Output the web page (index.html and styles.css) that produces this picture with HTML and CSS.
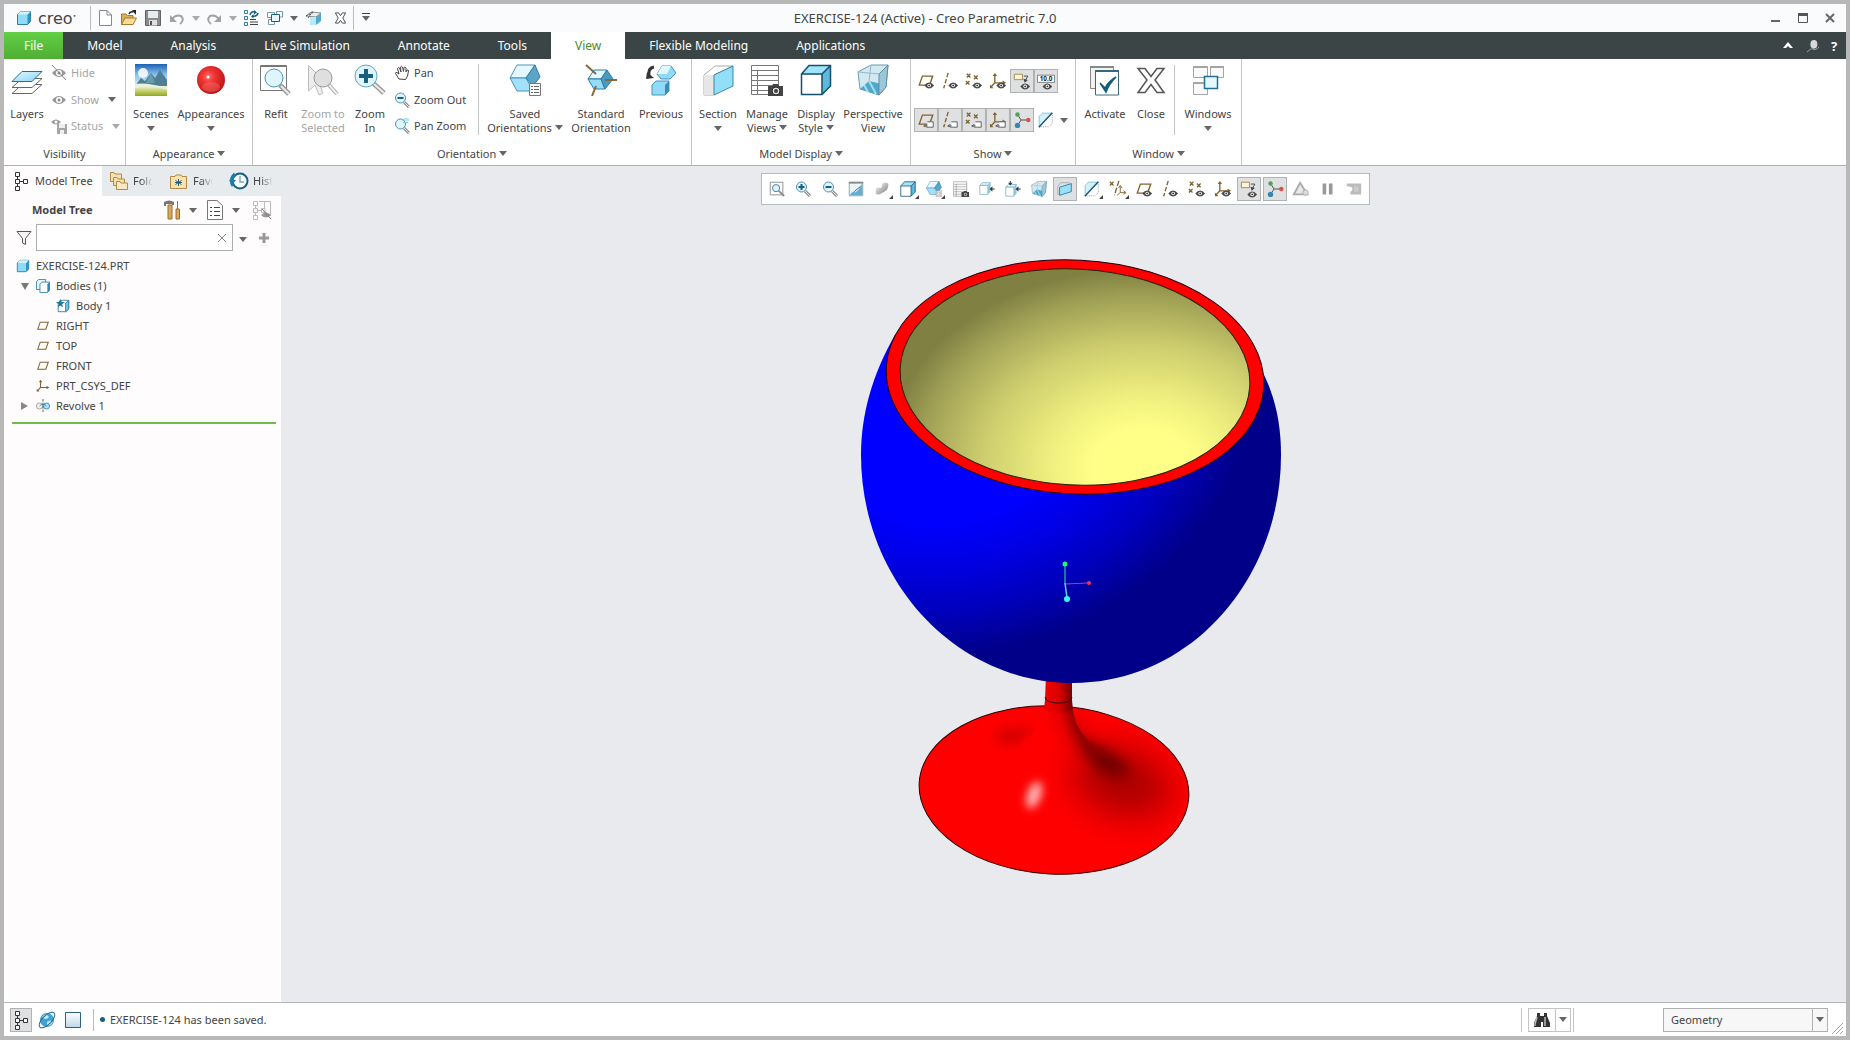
FILE: index.html
```html
<!DOCTYPE html>
<html lang="en">
<head>
  <meta charset="UTF-8">
  <meta name="viewport" content="width=device-width, initial-scale=1">
  <title>EXERCISE-124 (Active) - Creo Parametric 7.0</title>
  <link rel="stylesheet" href="styles.css">
</head>
<body>

  <!-- Icon sprite -->
  <svg class="sprite" aria-hidden="true">
    <defs>
      <linearGradient id="sky" x1="0" y1="0" x2="0" y2="1"><stop offset="0" stop-color="#1c62b4"/><stop offset=".5" stop-color="#8cc4ea"/><stop offset="1" stop-color="#d8ecf4"/></linearGradient>
      <linearGradient id="grass" x1="0" y1="0" x2="0" y2="1"><stop offset="0" stop-color="#f4f6c8"/><stop offset="1" stop-color="#92a81c"/></linearGradient>
      <radialGradient id="ball" cx=".4" cy=".38" r=".65"><stop offset="0" stop-color="#ff7070"/><stop offset=".35" stop-color="#f23434"/><stop offset="1" stop-color="#bb1414"/></radialGradient>
      <linearGradient id="ice" x1="0" y1="0" x2="1" y2="1"><stop offset="0" stop-color="#e6f9ff"/><stop offset="1" stop-color="#84d2f4"/></linearGradient>
      <linearGradient id="pane" x1="0" y1="0" x2="0" y2="1"><stop offset="0" stop-color="#ffffff"/><stop offset="1" stop-color="#bcd8ea"/></linearGradient>
      <linearGradient id="metal" x1="0" y1="0" x2="1" y2="1"><stop offset="0" stop-color="#ffffff"/><stop offset="1" stop-color="#777777"/></linearGradient>
    </defs>

    <symbol id="eye" viewBox="0 0 10 7"><path d="M0 3.5Q5-2.6 10 3.5Q5 9.6 0 3.5Z" fill="#4a4a4a"/><circle cx="5" cy="3.5" r="1.8" fill="#fff"/><circle cx="5" cy="3.5" r=".9" fill="#333"/></symbol>
    <symbol id="tag" viewBox="0 0 12 8"><path d="M5 1h6.500v6H4.500L1 5.500Q3 5 5 6" fill="#fff" stroke="#555"/><path d="M1 6q2-3 4-1" fill="none" stroke="#555"/></symbol>
    <symbol id="cube" viewBox="0 0 16 16"><path d="M1.500 4.500L4.500 1.500H14.500V11.500L11.500 14.500H1.500Z" fill="#8edcf8" stroke="#2b7da5"/><path d="M11.500 4.500L14.500 1.500V11.500L11.500 14.500Z" fill="#2f93c0"/><path d="M1.500 4.500L4.500 1.500H14.500L11.500 4.500Z" fill="#d4f4ff"/></symbol>
    <symbol id="lens" viewBox="0 0 16 16"><path d="M10 10L15 15" stroke="#8c8c8c" stroke-width="3"/><path d="M10 10L15 15" stroke="#e8e8e8"/><circle cx="6.500" cy="6" r="5" fill="#e2f4fb" stroke="#4b93b8"/></symbol>

    <!-- quick access -->
    <symbol id="new" viewBox="0 0 16 16"><path d="M2.500.5H10L14.500 5V15.500H2.500Z" fill="#fff" stroke="#888"/><path d="M10 .5V5H14.500" fill="none" stroke="#888"/></symbol>
    <symbol id="open" viewBox="0 0 16 16"><path d="M.5 14.500V4H5L6.500 5.500H12V14.500Z" fill="#dcae55" stroke="#a57a2c"/><path d="M.5 14.500L4 8H15.500L12 14.500Z" fill="#f9dc9a" stroke="#a57a2c"/><path d="M8 4Q9 1 12.500 2" fill="none" stroke="#222" stroke-width="1.500"/><path d="M11 0H15V5Z" fill="#222"/></symbol>
    <symbol id="save" viewBox="0 0 16 16"><path d="M.5.5H15.500V15.500H.5Z" fill="#8b8b8b" stroke="#636363"/><path d="M3 1H13V8H3Z" fill="#e2edf2"/><path d="M4 10H12V15.500H4Z" fill="#e0e0e0"/><path d="M5 11H7V15H5Z" fill="#555"/></symbol>
    <symbol id="undo" viewBox="0 0 16 16"><path d="M3 9Q7 4 12 6Q16 10 11 14" fill="none" stroke="#a2a2a2" stroke-width="2"/><path d="M1 5V12H8Z" fill="#a2a2a2"/></symbol>
    <symbol id="redo" viewBox="0 0 16 16"><path d="M13 9Q9 4 4 6Q0 10 5 14" fill="none" stroke="#a2a2a2" stroke-width="2"/><path d="M15 5V12H8Z" fill="#a2a2a2"/></symbol>
    <symbol id="regen" viewBox="0 0 16 16"><path d="M1.500.5h3v3h-3zM1.500 6.500h3v3h-3zM1.500 12.500h3v3h-3z" fill="#fff" stroke="#2b7da5"/><path d="M7 9.500H13M7 12H15M7 14.500H15" stroke="#444"/><path d="M7 5Q8 1 12 2M15 3Q14 7 9 6" fill="none" stroke="#17607f" stroke-width="1.500"/><path d="M11 0L14 2.500L11 4.500ZM10.500 4L8 6.500L10.500 8.500Z" fill="#17607f"/></symbol>
    <symbol id="wins" viewBox="0 0 16 16"><path d="M.5 2.500H7.500V7.500H.5ZM9.500 1.500H15.500V7H9.500ZM1.500 9.500H7.500V14.500H1.500Z" fill="#fff" stroke="#7396a8"/><path d="M4.500 4.500H12.500V11.500H4.500Z" fill="#e9f8ff" stroke="#17607f"/></symbol>
    <symbol id="family" viewBox="0 0 18 16"><path d="M1 6L6 2L16 3L11 7Z" fill="#eee" stroke="#888"/><path d="M5 7H11V15H5Z" fill="#b8eafb"/><path d="M11 7L16 3V11L11 15Z" fill="#51aacb"/><path d="M1 6L9 2M3 8L8 1" stroke="#555" stroke-dasharray="2 1"/></symbol>
    <symbol id="closewin" viewBox="0 0 14 14"><path d="M1.500 1.500H5L7 4.500L9 1.500H12.500L9.500 7L12.500 12.500H9L7 9.500L5 12.500H1.500L4.500 7Z" fill="#fff" stroke="#444"/></symbol>

    <!-- ribbon, large -->
    <symbol id="layers" viewBox="0 0 32 32"><path d="M11 20.500H31L21 29.500H1Z" fill="#fff" stroke="#666"/><path d="M11 14.500H31L21 23.500H1Z" fill="#fff" stroke="#666"/><path d="M11 7.500H31L21 17.500H1Z" fill="url(#ice)" stroke="#266f91"/></symbol>
    <symbol id="scenes" viewBox="0 0 32 32"><path d="M0 0H32V22H0Z" fill="url(#sky)"/><circle cx="8" cy="9" r="5" fill="#fff" opacity=".85"/><path d="M0 22L6 14L10 17L16 9L20 14L25 6L32 16V23H0Z" fill="#4f7f96"/><path d="M16 9L20 19L11 19Z" fill="#6c9aab"/><path d="M0 22H32V32H0Z" fill="url(#grass)"/><path d="M0 20Q12 18 32 24V26Q14 20 0 24Z" fill="#e8f0e0"/></symbol>
    <symbol id="appearances" viewBox="0 0 32 32"><circle cx="16" cy="16" r="14" fill="url(#ball)"/><circle cx="13" cy="13" r="1.500" fill="#fff"/><ellipse cx="16" cy="23" rx="9" ry="5" fill="#ff8080" opacity=".35"/></symbol>
    <symbol id="refit" viewBox="0 0 32 32"><path d="M.5 1.500H26.500V26.500H.5Z" fill="#fff" stroke="#777"/><path d="M1 2H26" stroke="#777" stroke-width="2"/><path d="M20 21L29 30" stroke="#999" stroke-width="5"/><path d="M21 22L29 30" stroke="#eee" stroke-width="2"/><circle cx="14" cy="14" r="9" fill="#e0f4fc" stroke="#4b93b8"/></symbol>
    <symbol id="zoomsel" viewBox="0 0 32 32"><path d="M1.500 1.500V27L8 21L12 31L16 29L12 19H19Z" fill="#eee" stroke="#bbb"/><path d="M21 20L30 30" stroke="#aaa" stroke-width="4"/><path d="M22 21L30 30" stroke="#eee" stroke-width="2"/><circle cx="16" cy="14" r="9" fill="#dfdfdf" stroke="#999"/></symbol>
    <symbol id="zoomin" viewBox="0 0 32 32"><path d="M19 19L30 29" stroke="#999" stroke-width="5"/><path d="M20 20L30 29" stroke="#eee" stroke-width="2"/><circle cx="12" cy="12" r="11" fill="#dff4fc" stroke="#65a6c5"/><path d="M12 5V19M5 12H19" stroke="#17607f" stroke-width="4"/></symbol>
    <symbol id="savedori" viewBox="0 0 32 32"><path d="M1 14L8 1H26L17 14Z" fill="#e6f8ff" stroke="#4b93b8"/><path d="M1 14H17L24 27H8Z" fill="#a3e1fa" stroke="#4b93b8"/><path d="M26 1L31 13L24 22L17 14Z" fill="#5aa5c8" stroke="#2b7da5"/><path d="M20.500 19.500H31.500V31.500H20.500Z" fill="#fff" stroke="#777"/><path d="M22 22.500H24M25 22.500H30M22 25.500H24M25 25.500H30M22 28.500H24M25 28.500H30" stroke="#666"/></symbol>
    <symbol id="stdori" viewBox="0 0 32 32"><path d="M3 15L9 6H22L16 15Z" fill="#e6f8ff" stroke="#2b7da5"/><path d="M3 15H16L20 25H9Z" fill="#96dcf7" stroke="#2b7da5"/><path d="M22 6L28 15L20 25L16 15Z" fill="#4a9bc0" stroke="#2b7da5"/><path d="M1 1L11 10M20 16H32M11 22L7 32" stroke="#86693a" stroke-width="2"/></symbol>
    <symbol id="previous" viewBox="0 0 32 32"><path d="M12 10L17 2H26L31 9L25 15H16Z" fill="#8edaf8" stroke="#4b93b8"/><path d="M12 10L17 2H26L22 10Z" fill="#e1f7ff"/><path d="M7 21L11 17H24V27L20 31H7Z" fill="#8edaf8" stroke="#4b93b8"/><path d="M20 21L24 17V27L20 31Z" fill="#398eb5"/><path d="M9 3Q3 4 4 11" fill="none" stroke="#333" stroke-width="3"/><path d="M1 15L2 8L9 14Z" fill="#333"/></symbol>
    <symbol id="section" viewBox="0 0 32 32"><path d="M2 11L13 2H31L12 11V31H2Z" fill="#fff" stroke="#aaa"/><path d="M2 11H12V31H2Z" fill="#e6e6e6"/><path d="M12 11L31 2V22L12 31Z" fill="#92e0f8" stroke="#3888aa"/></symbol>
    <symbol id="manage" viewBox="0 0 32 32"><path d="M.5 1.500H27.500V30.500H.5Z" fill="#fff"/><path d="M.5 1.500H27.500V30.500H.5ZM.5 6.500H28M.5 11.500H28M.5 16.500H28M.5 21.500H28M.5 26.500H28M6.500 6V31" fill="none" stroke="#777"/><path d="M17 22H21L22 20H27L28 22H32V32H17Z" fill="#444"/><circle cx="25" cy="27" r="4" fill="#ddd" stroke="#222"/><circle cx="25" cy="27" r="2" fill="#444"/></symbol>
    <symbol id="display" viewBox="0 0 32 32"><path d="M1.500 10L9 1.500H30.500V22L22 30.500H1.500Z" fill="#9fe4fa"/><path d="M1.500 10H22V30.500H1.500Z" fill="#fff"/><path d="M22 10L30.500 1.500V22L22 30.500Z" fill="#5fb8da"/><path d="M1.500 10L9 1.500H30.500V22L22 30.500H1.500ZM1.500 10H22V30.500M22 10L30.500 1.500" fill="none" stroke="#144f6b" stroke-width="1.500"/></symbol>
    <symbol id="persp" viewBox="0 0 32 32"><path d="M1 8L14 1H31L29 23L22 31L3 25Z" fill="#d3e9f2" stroke="#6d9aae"/><path d="M3 25L12 17L29 21L22 31Z" fill="#4ba9cc"/><path d="M22 10L31 1L29 23L22 31Z" fill="#9cc7d9" stroke="#5e8da2"/><path d="M1 8L22 10M14 1L12 17" stroke="#9ab8c6"/><path d="M7 21L11 28M12 17L19 30" stroke="#a8dbef" stroke-width="2"/></symbol>
    <symbol id="activate" viewBox="0 0 32 32"><path d="M1.500 2.500H24.500V24.500H1.500Z" fill="#f2f2f2" stroke="#888"/><path d="M1 3H25" stroke="#888" stroke-width="2"/><path d="M6.500 6.500H29.500V31H6.500Z" fill="#fff" stroke="#36697f"/><path d="M6 7H30" stroke="#36697f" stroke-width="2"/><path d="M11 19L16 24Q20 17 27 13Q20 20 17 28Z" fill="#155d80" stroke="#155d80" stroke-width="1.500"/></symbol>
    <symbol id="closex" viewBox="0 0 32 32"><path d="M3 4.500H10L16 12.500L22 4.500H29L20 16L29 28.500H22L16 20.500L10 28.500H3L12 16Z" fill="#fff" stroke="#555" stroke-width="1.500"/></symbol>
    <symbol id="windows" viewBox="0 0 32 32"><path d="M1.500 2.500H15.500V13.500H1.500ZM18.500 2.500H31.500V13.500H18.500ZM1.500 18.500H15.500V30.500H1.500Z" fill="#fafafa" stroke="#a5a5a5"/><path d="M1 3H15.500M18 3H32M1 19H15" stroke="#a5a5a5" stroke-width="2"/><path d="M12.500 12.500H25.500V24.500H12.500Z" fill="#e4f6fe" stroke="#256f8e" stroke-width="1.500"/></symbol>

    <!-- ribbon, small -->
    <symbol id="hide" viewBox="0 0 16 16"><path d="M1 8Q8 0 15 8Q8 16 1 8Z" fill="#999"/><circle cx="8" cy="8" r="3" fill="#fff"/><circle cx="8" cy="8" r="1.500" fill="#888"/><path d="M1 0L15 15" stroke="#888"/></symbol>
    <symbol id="show" viewBox="0 0 16 16"><path d="M1 8Q8 0 15 8Q8 16 1 8Z" fill="#999"/><circle cx="8" cy="8" r="3" fill="#fff"/><circle cx="8" cy="8" r="1.500" fill="#888"/></symbol>
    <symbol id="status" viewBox="0 0 16 16"><path d="M0 4Q5-1 10 4Q5 9 0 4Z" fill="#999"/><circle cx="5" cy="4" r="1.500" fill="#fff"/><path d="M6 6H16V16H6Z" fill="#a5a5a5"/><path d="M8 6H14V10H8ZM9 12H13V16H9Z" fill="#eee"/></symbol>
    <symbol id="pan" viewBox="0 0 16 16"><path d="M5 14L1.500 8.500Q1.500 7 3 7.500L5 9L3.500 3.500Q4 2 5.500 3L7 7L6.500 2Q7.500 .5 8.500 2L9.500 6.500L10 2.500Q11 1.500 12 3L12 7L13 5Q14.500 4.500 14.500 6L13.500 11L11.500 14.500Z" fill="#fff" stroke="#444"/></symbol>
    <symbol id="zoomout" viewBox="0 0 16 16"><use href="#lens"/><path d="M3.500 6H9.500" stroke="#17607f" stroke-width="2"/></symbol>
    <symbol id="zoomin-s" viewBox="0 0 16 16"><use href="#lens"/><path d="M3.500 6H9.500M6.500 3V9" stroke="#17607f" stroke-width="2"/></symbol>
    <symbol id="panzoom" viewBox="0 0 16 16"><use href="#lens"/><path d="M8 2H15M9 4.500H14M10 0H15" stroke="#7ac4e4"/></symbol>

    <!-- datum display -->
    <symbol id="plane" viewBox="0 0 20 20"><path d="M6 4.500H17.500L14 14.500H2.500Z" fill="none" stroke="#806430" stroke-width="1.500"/></symbol>
    <symbol id="axis" viewBox="0 0 20 20"><path d="M8 1L3 18" stroke="#806430" stroke-width="1.500" stroke-dasharray="5 2"/></symbol>
    <symbol id="points" viewBox="0 0 20 20"><path d="M2 2L6 6M6 2L2 6M10 4L14 8M14 4L10 8M1 10L5 14M5 10L1 14" stroke="#806430" stroke-width="1.500"/></symbol>
    <symbol id="csys" viewBox="0 0 20 20"><path d="M6.500 3V12L2 17M6.500 12H17" fill="none" stroke="#806430" stroke-width="1.500"/><path d="M4 4.500L6.500 1L9 4.500ZM1 14V18H5ZM15 9.500L19 12L15 14.500Z" fill="#806430"/></symbol>
    <symbol id="plane-eye" viewBox="0 0 20 20"><use href="#plane"/><use href="#eye" x="8" y="11" width="11" height="8"/></symbol>
    <symbol id="axis-eye" viewBox="0 0 20 20"><use href="#axis"/><use href="#eye" x="8" y="11" width="11" height="8"/></symbol>
    <symbol id="points-eye" viewBox="0 0 20 20"><use href="#points"/><use href="#eye" x="8" y="11" width="11" height="8"/></symbol>
    <symbol id="csys-eye" viewBox="0 0 20 20"><use href="#csys"/><use href="#eye" x="8" y="11" width="11" height="8"/></symbol>
    <symbol id="plane-tag" viewBox="0 0 20 20"><use href="#plane"/><use href="#tag" x="6" y="11" width="13" height="8"/></symbol>
    <symbol id="axis-tag" viewBox="0 0 20 20"><use href="#axis"/><use href="#tag" x="6" y="11" width="13" height="8"/></symbol>
    <symbol id="points-tag" viewBox="0 0 20 20"><use href="#points"/><use href="#tag" x="6" y="11" width="13" height="8"/></symbol>
    <symbol id="csys-tag" viewBox="0 0 20 20"><use href="#csys"/><use href="#tag" x="6" y="11" width="13" height="8"/></symbol>
    <symbol id="annot" viewBox="0 0 20 20"><path d="M1.500 2.500H10.500V8.500H1.500Z" fill="#fdf4da" stroke="#a08448"/><path d="M12 4.500H16.500L14 9" fill="none" stroke="#444"/><path d="M11.500 7.500L16.500 9L13 12Z" fill="#444"/><use href="#eye" x="8" y="12" width="11" height="8"/></symbol>
    <symbol id="dim" viewBox="0 0 20 20"><path d="M.5 3.500H19.500V11.500H.5Z" fill="#fff" stroke="#777"/><use href="#eye" x="6" y="12" width="11" height="8"/></symbol>
    <symbol id="spin" viewBox="0 0 20 20"><path d="M5 4L9 10L5 16M9 10H17" fill="none" stroke="#444"/><circle cx="5" cy="4" r="2.500" fill="#4fa356"/><circle cx="17" cy="10" r="2.500" fill="#d9534f"/><circle cx="5" cy="16" r="3" fill="#3088b5"/></symbol>
    <symbol id="clip" viewBox="0 0 20 20"><path d="M2.500 6L6 2.500H17V14L13 17.500H2.500Z" fill="none" stroke="#8a9aa5" stroke-dasharray="1 1"/><path d="M2.500 17L2.500 6L6 2.500H17Z" fill="#d2f1fb" stroke="#8ecbe2"/><path d="M2 18L17 2" stroke="#1a5674" stroke-width="1.500"/></symbol>

    <!-- in-graphics toolbar -->
    <symbol id="refit-s" viewBox="0 0 20 20"><path d="M2.500 2.500H16.500V16.500H2.500Z" fill="#fff" stroke="#888"/><path d="M12 12L18 18" stroke="#888" stroke-width="2"/><circle cx="9" cy="9" r="4" fill="#def2fa" stroke="#36799c"/></symbol>
    <symbol id="repaint" viewBox="0 0 20 20"><path d="M2.500 2.500H17.500V17.500H2.500Z" fill="#eaf8fe" stroke="#88a0ac"/><path d="M17 3V17H3Q6 11 9 14Q14 11 17 3Z" fill="#63afcd"/><path d="M2 3H18" stroke="#888" stroke-width="2"/><path d="M8 13L15 7" stroke="#17607f"/></symbol>
    <symbol id="render" viewBox="0 0 20 20"><path d="M3 11Q3 7 8 9Q10 9 10 5Q12 1 17 4Q18 11 11 14Q5 18 3 15Z" fill="url(#metal)"/></symbol>
    <symbol id="boxadd" viewBox="0 0 20 20"><path d="M2 6L5 3H14L11 6Z" fill="#d9f5ff" stroke="#8cb9cb"/><path d="M2 6H11V16H2Z" fill="#fff" stroke="#8cb9cb"/><path d="M11 6L14 3V13L11 16Z" fill="#8cc6dc"/><path d="M13 10L16 7V9.500H18.500V10.500H16V13Z" fill="#333"/></symbol>
    <symbol id="boxadd2" viewBox="0 0 20 20"><path d="M2 8L5 5H14L11 8Z" fill="#d9f5ff" stroke="#8cb9cb"/><path d="M2 8H11V18H2Z" fill="#fff" stroke="#8cb9cb"/><path d="M11 8L14 5V15L11 18Z" fill="#8cc6dc"/><path d="M13 10L16 7V9.500H18.500V10.500H16V13ZM7 6L4.500 3H6.500V1H7.500V3H9.500Z" fill="#333"/></symbol>
    <symbol id="cut" viewBox="0 0 20 20"><path d="M2 7L5 3H15M2 7V16H4" fill="none" stroke="#aaa"/><path d="M4 8L17 4V13L4 17Z" fill="#9ae2fa" stroke="#2b7da5"/></symbol>
    <symbol id="filters" viewBox="0 0 20 20"><path d="M1 2L5 6M5 2L1 6M11 1L6 17" stroke="#806430" stroke-width="1.500" stroke-dasharray="6 2"/><path d="M12.500 7V14L9 17M12.500 14H18M10.500 9L12.500 6L14.500 9M16 12L19 14L16 16" fill="none" stroke="#806430"/></symbol>
    <symbol id="warn" viewBox="0 0 20 20"><path d="M9 3L17 16H2Z" fill="#e8e8e8" stroke="#aaa" stroke-width="2"/><circle cx="15" cy="14" r="3" fill="#ddd" stroke="#aaa"/></symbol>
    <symbol id="pause" viewBox="0 0 20 20"><path d="M4 4H8V16H4ZM11 4H15V16H11Z" fill="#999"/></symbol>
    <symbol id="stop" viewBox="0 0 20 20"><path d="M2 4H18V16H6V13Q9 12 8 9Q7 7 2 7Z" fill="#bcbcbc"/><path d="M10 7H15V13H10Z" fill="#ccc"/></symbol>

    <!-- model tree -->
    <symbol id="tree" viewBox="0 0 16 20"><path d="M2.500 1.500H6.500V5.500H2.500ZM2.500 8.500H6.500V12.500H2.500ZM2.500 15.500H6.500V19.500H2.500ZM10.500 8.500H14.500V12.500H10.500Z" fill="#fff" stroke="#333"/><path d="M4.500 5.500V8.500M4.500 12.500V15.500M6.500 10.500H10.500" stroke="#333"/></symbol>
    <symbol id="folders" viewBox="0 0 20 20"><path d="M1.500 10.500V1.500H5L6 3H12.500V10.500Z" fill="#f8e0ae" stroke="#b18a45"/><path d="M4.500 14.500V6.500H8L9 8H15.500V14.500Z" fill="#f8e0ae" stroke="#b18a45"/><path d="M7.500 18.500V10.500H11L12 12H18.500V18.500Z" fill="#fde9bf" stroke="#b18a45"/></symbol>
    <symbol id="fav" viewBox="0 0 20 20"><path d="M1.500 17.500V5.500H6L7 4H12L13 5.500H17.500V17.500Z" fill="#fbe2ab" stroke="#b18a45"/><path d="M9.500 8V15M6.500 9.500L12.500 13.500M12.500 9.500L6.500 13.500M6 11.500H13" stroke="#17607f"/></symbol>
    <symbol id="history" viewBox="0 0 20 20"><circle cx="11" cy="10" r="7.500" fill="#f5fbfe" stroke="#17607f" stroke-width="2"/><path d="M11 5V11H15" fill="none" stroke="#8aa" stroke-width="1.500"/><path d="M4 15Q0 8 6 3" fill="none" stroke="#1d7bab" stroke-width="3"/><path d="M0 9H7L3 14Z" fill="#1d7bab"/></symbol>
    <symbol id="tools" viewBox="0 0 18 20"><path d="M1 2Q6-1 11 2V5H9V4H3V6H1Z" fill="#777"/><path d="M5 5H9V19H5Z" fill="#d8a95e" stroke="#9b6f2c"/><path d="M14 1H15V9H14Z" fill="#777"/><path d="M13 9H16.500V19H13Z" fill="#d8a95e" stroke="#9b6f2c"/></symbol>
    <symbol id="settings" viewBox="0 0 16 20"><path d="M.5.5H10L15.500 5.500V19.500H.5Z" fill="#fff" stroke="#777"/><path d="M3 7.500H5M3 11.500H5M3 15.500H5M7 7.500H13M7 11.500H13M7 15.500H13" stroke="#444"/></symbol>
    <symbol id="treehide" viewBox="0 0 20 20"><path d="M1.500 1.500H5.500V5.500H1.500ZM1.500 8.500H5.500V12.500H1.500ZM1.500 15.500H5.500V19.500H1.500ZM9.500 8.500H13V12.500H9.500ZM7 1.500H18.500V16M12.500 1.500V8M3.500 6V8M3.500 13V15M6 10.500H9" fill="none" stroke="#bbb"/><path d="M9 15Q14 10 19 15Q14 20 9 15Z" fill="#999"/><path d="M10 9L19 19" stroke="#777"/></symbol>
    <symbol id="filter" viewBox="0 0 16 16"><path d="M1 1.500H15L9.500 8.500V14.500L6.500 13V8.500Z" fill="#f4f4f4" stroke="#555"/></symbol>
    <symbol id="bodies" viewBox="0 0 16 16"><path d="M.5 3L3 .5H11V9H9V12H.5Z" fill="#e6f8ff" stroke="#2b7da5"/><path d="M4.500 6L7 3.500H15.500V13L13 15.500H4.500Z" fill="#fff" stroke="#2b7da5"/><path d="M13 6L15.500 3.500V13L13 15.500Z" fill="#2b85b0"/></symbol>
    <symbol id="body" viewBox="0 0 16 16"><path d="M2.500 5L5 1.500H14.500V11.500L11 14.500H2.500Z" fill="#fff" stroke="#2b7da5"/><path d="M11 5L14.500 1.500V11.500L11 14.500Z" fill="#77c7e8" stroke="#2b7da5"/><path d="M5 0L6.500 3.500L10 3.500L7 6L8 9.500L5 7.500L2 9.500L3 6L0 3.500H3.500Z" fill="#1c789c"/></symbol>
    <symbol id="revolve" viewBox="0 0 16 16"><circle cx="4" cy="8" r="3.500" fill="#f3f3f3" stroke="#999"/><circle cx="12" cy="8" r="3.500" fill="#b2e4f8" stroke="#2b85b0"/><path d="M4 8Q8 4 12 8" fill="none" stroke="#2b85b0"/><path d="M8 0V16" stroke="#555" stroke-dasharray="3 1"/></symbol>

    <!-- status bar -->
    <symbol id="globe" viewBox="0 0 18 18"><circle cx="9" cy="9" r="7" fill="#3fa3d3"/><path d="M4 6Q8 1 11 6Q8 10 4 6ZM9 11Q13 8 15 11Q12 16 9 14Z" fill="#c4e9f8"/><ellipse cx="9" cy="9" rx="10" ry="4.500" transform="rotate(-45 9 9)" fill="none" stroke="#2d6d8e"/></symbol>
    <symbol id="browser" viewBox="0 0 16 16"><path d="M.5.5H15.500V15.500H.5Z" fill="url(#pane)" stroke="#2f607c"/></symbol>
    <symbol id="find" viewBox="0 0 18 16"><path d="M4 1H7V4H11V1H14V4L17 11V15H10V10H8V15H1V11L4 4Z" fill="#333"/><path d="M4 5L2 12V14M12 5L12 14" stroke="#bbb" stroke-width="1.500"/></symbol>
    <symbol id="search" viewBox="0 0 16 16"><ellipse cx="9" cy="6" rx="4" ry="5" fill="#d8d8d8"/><path d="M1 15L6 11Q11 14 15 9" fill="none" stroke="#aaa"/></symbol>
  </svg>

  <div class="window">

    <!-- Title bar -->
    <header class="titlebar">
      <div class="quick">
        <svg class="i16"><use href="#cube"/></svg>
        <span class="logo">creo<sup>•</sup></span>
        <span class="sep"></span>
        <button aria-label="New"><svg class="i16"><use href="#new"/></svg></button>
        <button aria-label="Open"><svg class="i16"><use href="#open"/></svg></button>
        <button aria-label="Save"><svg class="i16"><use href="#save"/></svg></button>
        <button aria-label="Undo"><svg class="i16"><use href="#undo"/></svg></button>
        <button class="drop" aria-label="Undo list"><span class="caret dim"></span></button>
        <button aria-label="Redo"><svg class="i16"><use href="#redo"/></svg></button>
        <button class="drop" aria-label="Redo list"><span class="caret dim"></span></button>
        <button aria-label="Regenerate"><svg class="i16"><use href="#regen"/></svg></button>
        <button aria-label="Windows"><svg class="i16"><use href="#wins"/></svg></button>
        <button class="drop" aria-label="Window list"><span class="caret"></span></button>
        <button class="wide" aria-label="Model"><svg class="i18"><use href="#family"/></svg></button>
        <button aria-label="Close"><svg class="i16 tight"><use href="#closewin"/></svg></button>
        <span class="sep"></span>
        <button class="drop more" aria-label="Customize"><span class="caret lined"></span></button>
      </div>
      <h1>EXERCISE-124 (Active) - Creo Parametric 7.0</h1>
      <div class="controls">
        <button aria-label="Minimize"><svg viewBox="0 0 10 10"><path d="M0 8H9" stroke="#666" stroke-width="2"/></svg></button>
        <button aria-label="Maximize"><svg viewBox="0 0 10 10"><path d="M.5.5H9.500V9.500H.5ZM0 2H10" fill="none" stroke="#555"/><path d="M0 1.500H10" stroke="#555" stroke-width="3"/></svg></button>
        <button aria-label="Close window"><svg viewBox="0 0 10 10"><path d="M1 1L9 9M9 1L1 9" stroke="#666" stroke-width="2"/></svg></button>
      </div>
    </header>

    <!-- Tabs -->
    <nav class="tabs">
      <a href="#" class="file">File</a>
      <a href="#">Model</a>
      <a href="#">Analysis</a>
      <a href="#">Live Simulation</a>
      <a href="#">Annotate</a>
      <a href="#">Tools</a>
      <a href="#" class="active">View</a>
      <a href="#">Flexible Modeling</a>
      <a href="#">Applications</a>
      <div class="tab-tools">
        <button aria-label="Minimize the ribbon"><svg viewBox="0 0 10 10"><path d="M0 7L5 1L10 7L7 7L5 5L3 7Z" fill="#fff"/></svg></button>
        <button aria-label="Search"><svg class="i16"><use href="#search"/></svg></button>
        <button class="help">?</button>
      </div>
    </nav>

    <!-- Ribbon -->
    <section class="ribbon">
      <div class="group visibility">
        <div class="items">
          <button class="big"><svg><use href="#layers"/></svg>Layers</button>
          <div class="stack">
            <button disabled><svg class="i16"><use href="#hide"/></svg>Hide</button>
            <button disabled><svg class="i16"><use href="#show"/></svg>Show <span class="caret"></span></button>
            <button disabled><svg class="i16"><use href="#status"/></svg>Status <span class="caret dim"></span></button>
          </div>
        </div>
        <h2>Visibility</h2>
      </div>

      <div class="group appearance">
        <div class="items">
          <button class="big"><svg><use href="#scenes"/></svg>Scenes<span class="caret"></span></button>
          <button class="big"><svg><use href="#appearances"/></svg>Appearances<span class="caret"></span></button>
        </div>
        <h2>Appearance <span class="caret"></span></h2>
      </div>

      <div class="group orientation">
        <div class="items">
          <button class="big"><svg><use href="#refit"/></svg>Refit</button>
          <button class="big" disabled><svg><use href="#zoomsel"/></svg>Zoom to<br>Selected</button>
          <button class="big"><svg><use href="#zoomin"/></svg>Zoom<br>In</button>
          <div class="stack ruled">
            <button><svg class="i16"><use href="#pan"/></svg>Pan</button>
            <button><svg class="i16"><use href="#zoomout"/></svg>Zoom Out</button>
            <button><svg class="i16"><use href="#panzoom"/></svg>Pan Zoom</button>
          </div>
          <button class="big"><svg><use href="#savedori"/></svg>Saved<span class="line">Orientations <span class="caret"></span></span></button>
          <button class="big"><svg><use href="#stdori"/></svg>Standard<br>Orientation</button>
          <button class="big"><svg><use href="#previous"/></svg>Previous</button>
        </div>
        <h2>Orientation <span class="caret"></span></h2>
      </div>

      <div class="group model-display">
        <div class="items">
          <button class="big"><svg><use href="#section"/></svg>Section<span class="caret"></span></button>
          <button class="big"><svg><use href="#manage"/></svg>Manage<span class="line">Views <span class="caret"></span></span></button>
          <button class="big"><svg><use href="#display"/></svg>Display<span class="line">Style <span class="caret"></span></span></button>
          <button class="big"><svg><use href="#persp"/></svg>Perspective<br>View</button>
        </div>
        <h2>Model Display <span class="caret"></span></h2>
      </div>

      <div class="group show">
        <div class="items toggles">
          <div class="row">
            <button aria-label="Plane Display"><svg><use href="#plane-eye"/></svg></button>
            <button aria-label="Axis Display"><svg><use href="#axis-eye"/></svg></button>
            <button aria-label="Point Display"><svg><use href="#points-eye"/></svg></button>
            <button aria-label="Csys Display"><svg><use href="#csys-eye"/></svg></button>
            <button class="on" aria-label="Annotation Display"><svg><use href="#annot"/></svg></button>
            <button class="on" aria-label="Dimension Display"><svg viewBox="0 0 20 20"><use href="#dim"/><text class="dim-text" x="10" y="10">10.0</text></svg></button>
          </div>
          <div class="row">
            <button class="on" aria-label="Plane Tag Display"><svg><use href="#plane-tag"/></svg></button>
            <button class="on" aria-label="Axis Tag Display"><svg><use href="#axis-tag"/></svg></button>
            <button class="on" aria-label="Point Tag Display"><svg><use href="#points-tag"/></svg></button>
            <button class="on" aria-label="Csys Tag Display"><svg><use href="#csys-tag"/></svg></button>
            <button class="on" aria-label="Spin Center"><svg><use href="#spin"/></svg></button>
            <button aria-label="Transparency"><svg><use href="#clip"/></svg></button>
            <button class="drop" aria-label="Transparency list"><span class="caret"></span></button>
          </div>
        </div>
        <h2>Show <span class="caret"></span></h2>
      </div>

      <div class="group win">
        <div class="items">
          <button class="big"><svg><use href="#activate"/></svg>Activate</button>
          <button class="big"><svg><use href="#closex"/></svg>Close</button>
          <span class="rule"></span>
          <button class="big"><svg><use href="#windows"/></svg>Windows<span class="caret"></span></button>
        </div>
        <h2>Window <span class="caret"></span></h2>
      </div>
    </section>

    <!-- Workspace -->
    <main class="workspace">
      <aside class="sidebar">
        <div class="side-tabs">
          <a href="#" class="active"><svg class="tree-icon"><use href="#tree"/></svg>Model Tree</a>
          <a href="#"><svg class="i20"><use href="#folders"/></svg><span>Folder</span></a>
          <a href="#"><svg class="i20"><use href="#fav"/></svg><span>Favorites</span></a>
          <a href="#"><svg class="i20"><use href="#history"/></svg><span>History</span></a>
        </div>
        <div class="side-head">
          <h2>Model Tree</h2>
          <button aria-label="Tools"><svg class="i20"><use href="#tools"/></svg><span class="caret"></span></button>
          <button aria-label="Settings"><svg class="i20"><use href="#settings"/></svg><span class="caret"></span></button>
          <button aria-label="Hide tree items"><svg class="i20"><use href="#treehide"/></svg></button>
        </div>
        <div class="side-filter">
          <label for="treeFilter" aria-label="Filter"><svg class="i16"><use href="#filter"/></svg></label>
          <div class="field">
            <input type="text" id="treeFilter">
            <button aria-label="Clear"><svg viewBox="0 0 10 10"><path d="M1 1L9 9M9 1L1 9" stroke="#888"/></svg></button>
          </div>
          <button aria-label="Filter list"><span class="caret"></span></button>
          <button aria-label="Add"><svg viewBox="0 0 10 10"><path d="M5 0V10M0 5H10" stroke="#999" stroke-width="3"/></svg></button>
        </div>
        <ul class="tree">
          <li><svg class="i16"><use href="#cube"/></svg>EXERCISE-124.PRT</li>
          <li class="l1"><span class="twist open"></span><svg class="i16"><use href="#bodies"/></svg>Bodies (1)</li>
          <li class="l2"><svg class="i16"><use href="#body"/></svg>Body 1</li>
          <li class="l1"><svg class="i16"><use href="#plane"/></svg>RIGHT</li>
          <li class="l1"><svg class="i16"><use href="#plane"/></svg>TOP</li>
          <li class="l1"><svg class="i16"><use href="#plane"/></svg>FRONT</li>
          <li class="l1"><svg class="i16"><use href="#csys"/></svg>PRT_CSYS_DEF</li>
          <li class="l1"><span class="twist"></span><svg class="i16"><use href="#revolve"/></svg>Revolve 1</li>
        </ul>
      </aside>

      <section class="canvas">
        <div class="view-tools">
          <button aria-label="Refit"><svg><use href="#refit-s"/></svg></button>
          <button aria-label="Zoom In"><svg class="i16"><use href="#zoomin-s"/></svg></button>
          <button aria-label="Zoom Out"><svg class="i16"><use href="#zoomout"/></svg></button>
          <button aria-label="Repaint"><svg><use href="#repaint"/></svg></button>
          <button class="menu" aria-label="Rendering Options"><svg><use href="#render"/></svg></button>
          <button class="menu" aria-label="Display Style"><svg class="i16"><use href="#display"/></svg></button>
          <button class="menu" aria-label="Saved Orientations"><svg class="i16"><use href="#savedori"/></svg></button>
          <button aria-label="View Manager"><svg class="i16"><use href="#manage"/></svg></button>
          <button aria-label="Section Display"><svg><use href="#boxadd"/></svg></button>
          <button aria-label="Explode"><svg><use href="#boxadd2"/></svg></button>
          <button aria-label="Perspective View"><svg class="i16"><use href="#persp"/></svg></button>
          <button class="on" aria-label="Show Section"><svg><use href="#cut"/></svg></button>
          <button class="menu" aria-label="Transparency"><svg><use href="#clip"/></svg></button>
          <button class="menu" aria-label="Datum Display Filters"><svg><use href="#filters"/></svg></button>
          <button aria-label="Plane Display"><svg><use href="#plane-eye"/></svg></button>
          <button aria-label="Axis Display"><svg><use href="#axis-eye"/></svg></button>
          <button aria-label="Point Display"><svg><use href="#points-eye"/></svg></button>
          <button aria-label="Csys Display"><svg><use href="#csys-eye"/></svg></button>
          <button class="on" aria-label="Annotation Display"><svg><use href="#annot"/></svg></button>
          <button class="on" aria-label="Spin Center"><svg><use href="#spin"/></svg></button>
          <button disabled aria-label="Simulate"><svg><use href="#warn"/></svg></button>
          <button disabled aria-label="Pause"><svg><use href="#pause"/></svg></button>
          <button disabled aria-label="Stop"><svg><use href="#stop"/></svg></button>
        </div>

        <!-- Wine glass model -->
        <svg class="model" viewBox="846 250 440 630" role="img" aria-label="Wine glass">
          <defs>
            <radialGradient id="blue" gradientUnits="userSpaceOnUse" cx="0" cy="0" r="1" gradientTransform="translate(950 422) rotate(-12) scale(302 234)">
              <stop offset="0" stop-color="#0000ff"/><stop offset=".42" stop-color="#0000ff"/><stop offset=".6" stop-color="#0000e4"/><stop offset=".8" stop-color="#0000bc"/><stop offset="1" stop-color="#000088"/>
            </radialGradient>
            <radialGradient id="cream" gradientUnits="userSpaceOnUse" cx="0" cy="0" r="1" gradientTransform="translate(1148 464) scale(268 206)">
              <stop offset="0" stop-color="#ffff88"/><stop offset=".18" stop-color="#ffff88"/><stop offset=".34" stop-color="#f0f080"/><stop offset=".6" stop-color="#cdcd6e"/><stop offset=".82" stop-color="#a2a257"/><stop offset=".96" stop-color="#808043"/>
            </radialGradient>
            <linearGradient id="stem" gradientUnits="userSpaceOnUse" x1="1046" y1="0" x2="1073" y2="0">
              <stop offset="0" stop-color="#f00000"/><stop offset=".5" stop-color="#d80000"/><stop offset="1" stop-color="#700000"/>
            </linearGradient>
            <linearGradient id="cone" gradientUnits="userSpaceOnUse" x1="1044" y1="722" x2="1086" y2="712">
              <stop offset="0" stop-color="#ff0000"/><stop offset=".4" stop-color="#e80000"/><stop offset=".82" stop-color="#780000"/><stop offset="1" stop-color="#900000"/>
            </linearGradient>
            <linearGradient id="coneFade" x1="0" y1="0" x2="0" y2="1"><stop offset=".35" stop-color="#fff"/><stop offset=".85" stop-color="#000"/></linearGradient>
            <mask id="coneMask"><path d="M1000 700H1125V775H1000Z" fill="url(#coneFade)"/></mask>
            <filter id="wide" x="-80%" y="-80%" width="260%" height="260%"><feGaussianBlur stdDeviation="18"/></filter>
            <filter id="mid" x="-100%" y="-200%" width="300%" height="500%"><feGaussianBlur stdDeviation="7"/></filter>
            <filter id="fine" x="-60%" y="-60%" width="220%" height="220%"><feGaussianBlur stdDeviation="4"/></filter>
            <clipPath id="baseClip"><ellipse cx="1054" cy="790" rx="135" ry="83" transform="rotate(3 1054 790)"/></clipPath>
          </defs>
          <ellipse cx="1054" cy="790" rx="135" ry="84" transform="rotate(3 1054 790)" fill="#ff0000" stroke="#300"/>
          <g clip-path="url(#baseClip)">
            <ellipse cx="1122" cy="782" rx="50" ry="32" transform="rotate(20 1122 782)" fill="#a80000" filter="url(#wide)"/>
            <path d="M1070 712Q1078 744 1098 770Q1120 782 1132 770Q1112 750 1086 740Z" fill="#6c0000" filter="url(#mid)"/>
            <path d="M1034 728Q1024 742 1004 742Q990 740 1000 732Z" fill="#a00000" opacity=".7" filter="url(#mid)"/>
            <path d="M1044 704C1044 722 1036 734 1020 743L1005 775H1125L1104 751C1084 741 1074 726 1072 704Z" fill="url(#cone)" mask="url(#coneMask)"/>
            <ellipse cx="1034" cy="795" rx="7" ry="14" transform="rotate(20 1034 795)" fill="#ffb0b0" filter="url(#fine)"/>
          </g>
          <path d="M1046 675H1072V700L1073 710Q1058 716 1044 709L1045 700Z" fill="url(#stem)"/>
          <path d="M1045 697Q1046 703 1059 703Q1071 703 1072 697" fill="none" stroke="#300"/>
          <path d="M895 335C872 375 861 415 861 455C861 580 955 683 1073 683C1190 683 1281 580 1281 455C1281 420 1274 390 1256 360Z" fill="url(#blue)"/>
          <ellipse cx="1075" cy="377" rx="189" ry="117" transform="rotate(3 1075 377)" fill="#ff0000" stroke="#200010"/>
          <ellipse cx="1075" cy="377" rx="175" ry="108" transform="rotate(3 1075 377)" fill="url(#cream)" stroke="#222200"/>
          <path d="M1065 583V565" stroke="#40e0a0"/><path d="M1065 584L1088 583" stroke="#d03080"/><path d="M1065 583L1067 598" stroke="#60d0ff" stroke-width="1.500"/>
          <circle cx="1065" cy="564" r="2.500" fill="#30f070"/><circle cx="1089" cy="583" r="2" fill="#f03060"/><circle cx="1067" cy="599" r="3" fill="#30f4ff"/>
        </svg>
      </section>
    </main>

    <!-- Status bar -->
    <footer class="statusbar">
      <button class="on" aria-label="Model tree"><svg class="tree-icon"><use href="#tree"/></svg></button>
      <button aria-label="Web browser"><svg class="i18"><use href="#globe"/></svg></button>
      <button aria-label="Full screen"><svg class="i16"><use href="#browser"/></svg></button>
      <p><span class="bullet"></span>EXERCISE-124 has been saved.</p>
      <div class="finder">
        <button aria-label="Find"><svg class="i18"><use href="#find"/></svg></button>
        <button class="drop" aria-label="Find list"><span class="caret"></span></button>
      </div>
      <div class="select">
        <select aria-label="Selection filter"><option>Geometry</option></select>
        <span class="arrow"><span class="caret"></span></span>
      </div>
      <svg class="grip" viewBox="0 0 12 12"><path d="M1 12L12 1M5 12L12 5M9 12L12 9" stroke="#aaa"/></svg>
    </footer>
  </div>

</body>
</html>
```
FILE: styles.css
```css
/* RESET */
* {
  margin: 0;
  padding: 0;
  box-sizing: border-box;
}

body {
  font-family: "Noto Sans", "Open Sans", sans-serif;
  font-size: 11px;
  line-height: 14px;
  color: #444;
  background: #b8b8b8;
  overflow: hidden;
}

button {
  font: inherit;
  color: inherit;
  background: none;
  border: 1px solid transparent;
  white-space: nowrap;
}

a {
  color: inherit;
  text-decoration: none;
}

ul {
  list-style: none;
}

svg {
  display: block;
  flex: none;
}

.sprite {
  position: absolute;
  width: 0;
  height: 0;
}

.i16 { width: 16px; height: 16px; }
.i18 { width: 18px; height: 18px; }
.i20 { width: 20px; height: 20px; }
.tree-icon { width: 16px; height: 20px; }

.caret {
  display: inline-block;
  width: 0;
  height: 0;
  border: 4px solid transparent;
  border-top: 5px solid #666;
  border-bottom: 0;
  flex: none;
}

.caret.dim {
  border-top-color: #aaa;
}

.window {
  display: flex;
  flex-direction: column;
  height: 100vh;
  border: 4px solid #b8b8b8;
  background: #fff;
}

/* TITLE BAR */
.titlebar {
  display: grid;
  grid-template-columns: 1fr auto 1fr;
  align-items: center;
  height: 28px;
  flex: none;
  background: #fafbfd;
}

.titlebar h1 {
  font-size: 13px;
  font-weight: 400;
}

.quick {
  display: flex;
  align-items: center;
  padding-left: 12px;
}

.quick button {
  display: flex;
  align-items: center;
  justify-content: center;
  width: 24px;
  height: 24px;
}

.quick .drop {
  width: 13px;
}

.quick .more {
  width: 20px;
}

.quick .wide {
  width: 28px;
}

.quick .tight {
  width: 13px;
}

.logo {
  width: 50px;
  padding-left: 6px;
  font-family: "DejaVu Sans", sans-serif;
  font-size: 16px;
}

.logo sup {
  font-size: 6px;
}

.sep {
  width: 1px;
  height: 24px;
  margin-left: 8px;
  background: #bbb;
}

.sep + button {
  margin-left: 2px;
}

.quick button + .sep {
  margin-left: 1px;
}

.lined {
  position: relative;
}

.lined::before {
  content: "";
  position: absolute;
  top: -8px;
  left: -4px;
  width: 8px;
  height: 1px;
  background: #444;
}

.controls {
  display: flex;
  justify-content: flex-end;
  gap: 15px;
  padding-right: 10px;
}

.controls button,
.tab-tools button {
  width: 12px;
}

.controls svg {
  width: 10px;
  height: 10px;
}

/* TABS */
.tabs {
  display: flex;
  height: 27px;
  flex: none;
  background: #3b4545;
  color: #fff;
  font-size: 12px;
  line-height: 28px;
}

.tabs a {
  padding: 0 24px;
}

.tabs .file {
  padding: 0 20px;
  background: linear-gradient(#62cf45, #4fae34);
}

.tabs .active {
  background: #fff;
  color: #4c8a32;
}

.tab-tools {
  display: flex;
  align-items: center;
  gap: 11px;
  margin-left: auto;
  padding-right: 6px;
}

.tab-tools svg {
  width: 10px;
}

.tab-tools .i16 {
  width: 14px;
}

.tab-tools .help {
  font-weight: 700;
  font-size: 13px;
}

/* RIBBON */
.ribbon {
  display: flex;
  height: 107px;
  flex: none;
  border-bottom: 1px solid #aeb0b3;
}

.group {
  display: flex;
  flex-direction: column;
  border-right: 1px solid #c2c4c6;
}

.group h2 {
  margin-top: auto;
  padding-bottom: 4px;
  font-size: 11px;
  font-weight: 400;
  text-align: center;
}

.group h2 .caret,
.stack .caret,
.line .caret {
  vertical-align: 2px;
}

.items {
  display: grid;
  height: 86px;
}

.visibility .items { grid-template-columns: 46px 75px; }
.appearance .items { grid-template-columns: 50px 70px; padding-right: 6px; }
.orientation .items { grid-template-columns: 46px 48px 46px 86px 92px 60px 60px; }
.model-display .items { grid-template-columns: 52px 46px 52px 62px; padding-right: 6px; }
.win .items { grid-template-columns: 46px 46px 1px 66px; padding-left: 6px; }

.big {
  display: flex;
  flex-direction: column;
  align-items: center;
  padding-top: 4px;
  text-align: center;
}

.big svg {
  width: 32px;
  height: 32px;
  margin-bottom: 11px;
}

.big > .caret {
  margin-top: 5px;
}

.stack {
  display: flex;
  flex-direction: column;
  justify-content: space-between;
  margin: 5px 0 10px;
}

.stack button {
  display: flex;
  align-items: center;
  gap: 4px;
  height: 18px;
}

.stack .caret {
  margin-left: 5px;
}

.ruled {
  border-right: 1px solid #c2c4c6;
}

.rule {
  background: #c2c4c6;
  margin: 6px 0 10px;
}

button:disabled {
  color: #a5a5a5;
}

.on {
  background: #dfe0e2;
  border-color: #b0b2b4;
}

.toggles {
  align-content: start;
  gap: 15px;
  width: 164px;
  padding: 10px 0 0 3px;
}

.row {
  display: flex;
}

.row button {
  display: flex;
  align-items: center;
  justify-content: center;
  width: 24px;
  height: 24px;
}

.row .drop {
  width: 12px;
}

.row svg,
.view-tools svg {
  width: 18px;
  height: 18px;
}

.dim-text {
  font-size: 7px;
  font-weight: 700;
  text-anchor: middle;
  fill: #222;
}

/* WORKSPACE */
.workspace {
  display: flex;
  flex: 1;
  min-height: 0;
}

.sidebar {
  width: 277px;
  flex: none;
  background: #fefcfd;
}

.side-tabs {
  display: grid;
  grid-template-columns: 98px 60px 60px 1fr;
  height: 30px;
  background: #e8ebed;
}

.side-tabs a {
  display: flex;
  align-items: center;
  gap: 4px;
  min-width: 0;
  padding-left: 7px;
}

.side-tabs .active {
  gap: 6px;
  padding-left: 9px;
  background: #fefcfd;
}

.side-tabs span {
  width: 20px;
  overflow: hidden;
  mask-image: linear-gradient(90deg, #000 40%, transparent);
}

.side-head {
  display: flex;
  align-items: center;
  height: 28px;
  padding: 0 8px 0 28px;
}

.side-head h2 {
  flex: 1;
  font-size: 11px;
}

.side-head button {
  display: flex;
  align-items: center;
  gap: 7px;
  margin-left: 6px;
}

.side-head button:last-child {
  margin-left: 10px;
}

.side-filter {
  display: flex;
  align-items: center;
  height: 27px;
  padding-left: 12px;
}

.field {
  display: flex;
  align-items: center;
  width: 197px;
  height: 27px;
  margin-left: 4px;
  padding-right: 4px;
  border: 1px solid #a9adae;
  background: #fff;
}

.field input {
  flex: 1;
  min-width: 0;
  height: 100%;
  padding: 0 6px;
  border: 0;
  outline: 0;
  font: inherit;
  background: none;
}

.side-filter button {
  width: 12px;
  margin-left: 4px;
}

.side-filter svg {
  width: 10px;
}

.side-filter .i16 {
  width: 16px;
}

.side-filter button:last-child {
  margin-left: 9px;
}

/* MODEL TREE */
.tree {
  margin: 5px 5px 0 8px;
  padding-bottom: 6px;
  border-bottom: 2px solid #6cc04a;
}

.tree li {
  display: flex;
  align-items: center;
  gap: 6px;
  height: 20px;
  padding-left: 4px;
}

.tree .i16 {
  width: 14px;
  height: 14px;
}

.tree .l1 {
  padding-left: 24px;
}

.tree .l2 {
  padding-left: 44px;
}

.twist {
  width: 0;
  margin-left: -15px;
  margin-right: -6px;
  border: 4px solid transparent;
  border-left: 7px solid #888;
  border-right: 0;
}

.twist + svg {
  margin-left: 8px;
}

.twist.open {
  border: 4px solid transparent;
  border-top: 7px solid #777;
  border-bottom: 0;
  margin-right: -7px;
}

/* GRAPHICS AREA */
.canvas {
  display: flex;
  flex-direction: column;
  align-items: center;
  flex: 1;
  padding: 7px 0 0 4px;
  background: #e8eaee;
}

.view-tools {
  display: grid;
  grid-template-columns: repeat(23, 1fr);
  align-items: center;
  justify-items: center;
  width: 609px;
  height: 32px;
  padding: 0 2px;
  border: 1px solid #b4bcc0;
  background: #fff;
}

.view-tools button {
  position: relative;
  display: flex;
  align-items: center;
  justify-content: center;
  width: 24px;
  height: 24px;
}

.view-tools .i16 {
  width: 16px;
  height: 16px;
}

.view-tools .menu::after {
  content: "";
  position: absolute;
  right: 0;
  bottom: 1px;
  border: 2px solid #444;
  border-top-color: transparent;
  border-left-color: transparent;
}

.model {
  width: 440px;
  height: 630px;
  margin-top: 45px;
}

/* STATUS BAR */
.statusbar {
  display: flex;
  align-items: center;
  height: 34px;
  flex: none;
  padding-left: 6px;
  border-top: 1px solid #b4b6b9;
}

.statusbar button {
  display: flex;
  align-items: center;
  justify-content: center;
  width: 22px;
  height: 24px;
  margin-right: 4px;
}

.statusbar p {
  display: flex;
  align-items: center;
  height: 22px;
  margin-left: 5px;
  padding-left: 6px;
  border-left: 1px solid #bbb;
}

.bullet {
  width: 5px;
  height: 5px;
  margin-right: 5px;
  border-radius: 50%;
  background: #17607f;
}

.finder {
  display: flex;
  margin-left: auto;
  padding: 0 2px 0 6px;
  border: 1px solid #c4c4c4;
  border-width: 0 1px;
}

.statusbar .finder button {
  width: 28px;
  margin: 0;
  border-color: #c4c4c4;
}

.statusbar .finder .drop {
  width: 15px;
  border-left: 0;
}

.select {
  display: flex;
  width: 165px;
  height: 24px;
  margin-left: 89px;
  border: 1px solid #aeb0b2;
  background: #f7f7f8;
}

.select select {
  flex: 1;
  padding-left: 7px;
  border: 0;
  appearance: none;
  background: none;
  font: inherit;
  color: inherit;
}

.arrow {
  display: flex;
  align-items: center;
  width: 15px;
  padding-left: 3px;
  border-left: 1px solid #aeb0b2;
  pointer-events: none;
}

.grip {
  width: 12px;
  height: 12px;
  align-self: flex-end;
  margin: 0 3px 2px;
}
```
